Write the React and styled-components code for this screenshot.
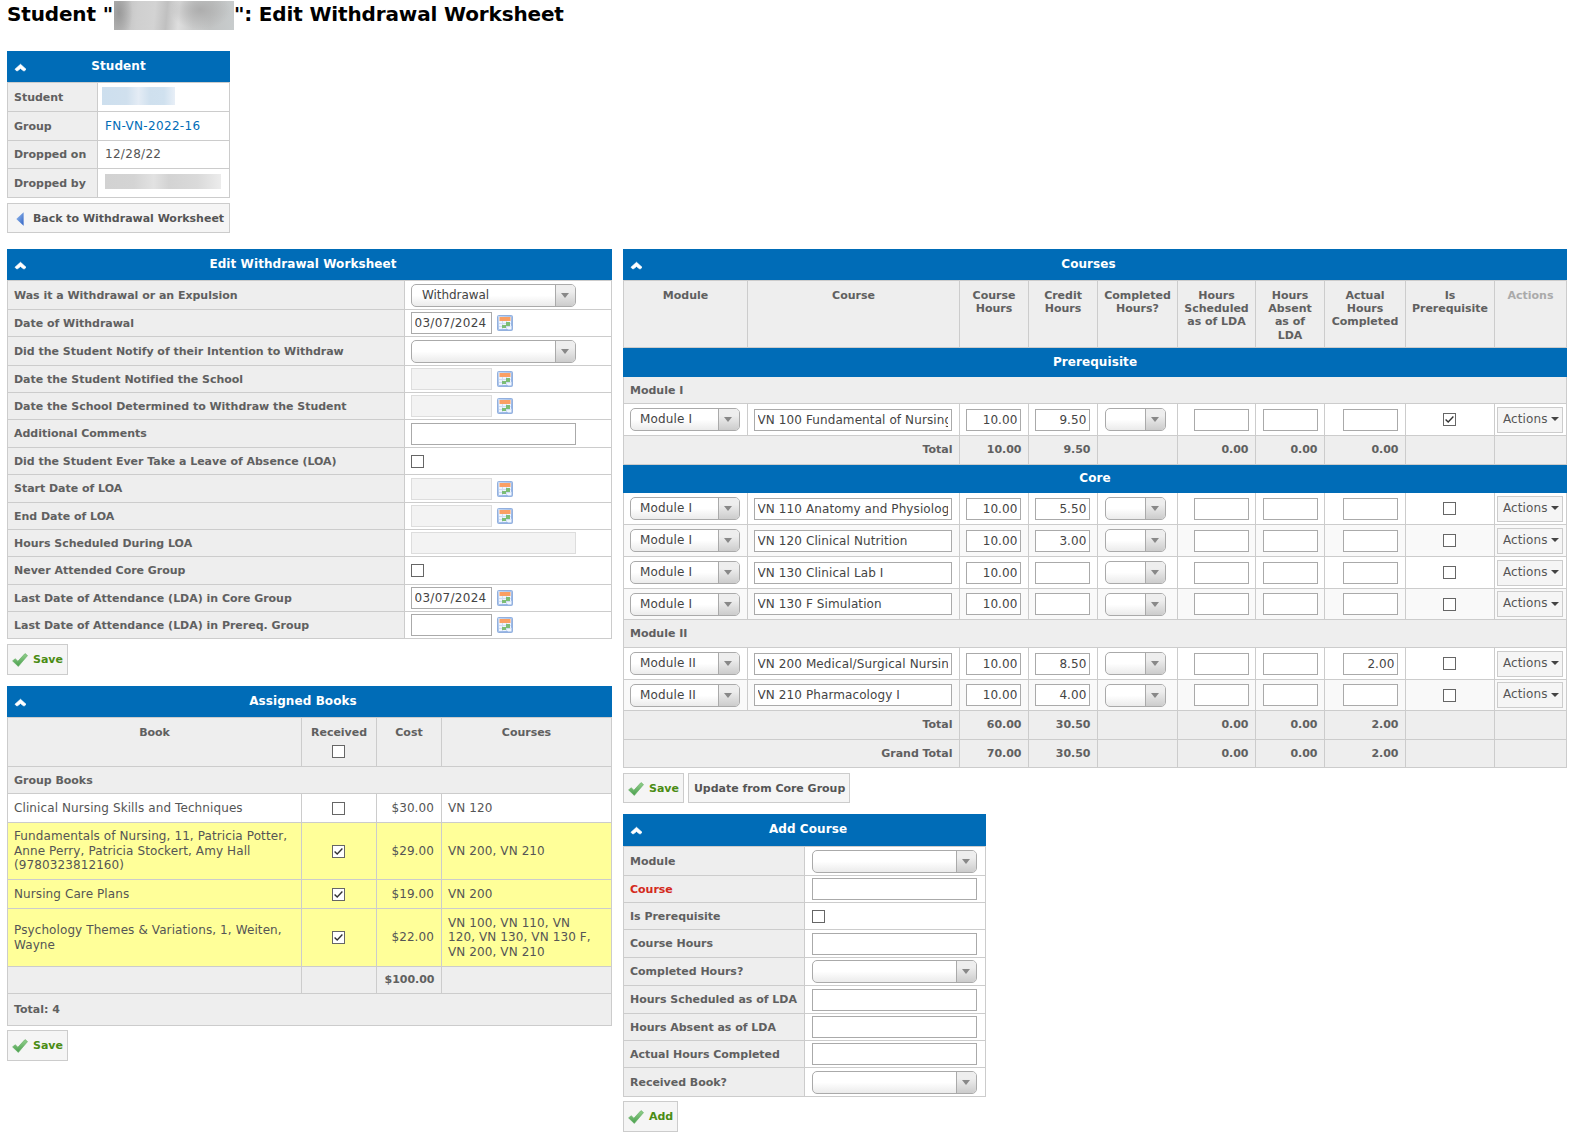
import React from 'react';
import styled, { createGlobalStyle, css } from 'styled-components';

const worksheetRows = [
  { label: 'Was it a Withdrawal or an Expulsion', type: 'select', value: 'Withdrawal', h: 29 },
  { label: 'Date of Withdrawal', type: 'date', value: '03/07/2024', h: 27 },
  { label: 'Did the Student Notify of their Intention to Withdraw', type: 'select', h: 29 },
  { label: 'Date the Student Notified the School', type: 'date', disabled: true, h: 27 },
  { label: 'Date the School Determined to Withdraw the Student', type: 'date', disabled: true, h: 27 },
  { label: 'Additional Comments', type: 'text', h: 28 },
  { label: 'Did the Student Ever Take a Leave of Absence (LOA)', type: 'check', h: 27 },
  { label: 'Start Date of LOA', type: 'date', disabled: true, h: 28 },
  { label: 'End Date of LOA', type: 'date', disabled: true, h: 27 },
  { label: 'Hours Scheduled During LOA', type: 'text', disabled: true, h: 27 },
  { label: 'Never Attended Core Group', type: 'check', h: 28 },
  { label: 'Last Date of Attendance (LDA) in Core Group', type: 'date', value: '03/07/2024', h: 27 },
  { label: 'Last Date of Attendance (LDA) in Prereq. Group', type: 'date', h: 27 },
];

const addCourseRows = [
  { label: 'Module', type: 'select', h: 29 },
  { label: 'Course', type: 'text', required: true, h: 27 },
  { label: 'Is Prerequisite', type: 'check', h: 27 },
  { label: 'Course Hours', type: 'text', h: 28 },
  { label: 'Completed Hours?', type: 'select', h: 28 },
  { label: 'Hours Scheduled as of LDA', type: 'text', h: 28 },
  { label: 'Hours Absent as of LDA', type: 'text', h: 27 },
  { label: 'Actual Hours Completed', type: 'text', h: 27 },
  { label: 'Received Book?', type: 'select', h: 29 },
];

const books = [
  { title: 'Clinical Nursing Skills and Techniques', cost: '$30.00', courses: 'VN 120', h: 29 },
  {
    title: 'Fundamentals of Nursing, 11, Patricia Potter, Anne Perry, Patricia Stockert, Amy Hall (9780323812160)',
    received: true,
    cost: '$29.00',
    courses: 'VN 200, VN 210',
    h: 57,
  },
  { title: 'Nursing Care Plans', received: true, cost: '$19.00', courses: 'VN 200', h: 29 },
  {
    title: 'Psychology Themes & Variations, 1, Weiten, Wayne',
    received: true,
    cost: '$22.00',
    courses: 'VN 100, VN 110, VN 120, VN 130, VN 130 F, VN 200, VN 210',
    h: 58,
  },
];

const courseHeads = [
  { text: 'Module' },
  { text: 'Course' },
  { text: 'Course Hours' },
  { text: 'Credit Hours' },
  { text: 'Completed Hours?' },
  { text: 'Hours Scheduled as of LDA' },
  { text: 'Hours Absent as of LDA', pad: 9 },
  { text: 'Actual Hours Completed' },
  { text: 'Is Prerequisite' },
  { text: 'Actions', faded: true },
];

const prerequisite = [
  { module: 'Module I', course: 'VN 100 Fundamental of Nursing', credit: '9.50', prereq: true, h: 32 },
];

const coreOne = [
  { module: 'Module I', course: 'VN 110 Anatomy and Physiology', credit: '5.50', h: 31, flush: true },
  { module: 'Module I', course: 'VN 120 Clinical Nutrition', credit: '3.00', h: 32, alt: true },
  { module: 'Module I', course: 'VN 130 Clinical Lab I', credit: '', h: 32 },
  { module: 'Module I', course: 'VN 130 F Simulation', credit: '', h: 31, alt: true },
];

const coreTwo = [
  { module: 'Module II', course: 'VN 200 Medical/Surgical Nursing', credit: '8.50', actual: '2.00', h: 32 },
  { module: 'Module II', course: 'VN 210 Pharmacology I', credit: '4.00', h: 31, alt: true },
];

const studentCols = '89px 132px';
const worksheetCols = '396px 207px';
const bookCols = '293px 75px 65px 170px';
const courseCols = '123px 212px 69px 69px 80px 78px 69px 81px 89px 72px';
const addCols = '180px 181px';

const CheckMark = () => (
  <svg width='16' height='14' viewBox='0 0 16 14'>
    <defs>
      <linearGradient id='tick' x1='0' y1='0' x2='0' y2='1'>
        <stop offset='0' stopColor='#93d08d' />
        <stop offset='1' stopColor='#4aa04e' />
      </linearGradient>
    </defs>
    <path
      d='M0.6 7.9 L3.2 5.8 L5.9 8.2 L13 0.6 L15.5 2.6 L6.3 13.4 Z'
      fill='url(#tick)'
      stroke='#69b067'
      strokeWidth='0.7'
      strokeLinejoin='round'
    />
  </svg>
);

const Calendar = () => (
  <svg width='16' height='16' viewBox='0 0 16 16'>
    <defs>
      <linearGradient id='cal' x1='0' y1='0' x2='1' y2='1'>
        <stop offset='0' stopColor='#c9dcf6' />
        <stop offset='1' stopColor='#86a9df' />
      </linearGradient>
    </defs>
    <rect x='0.5' y='0.5' width='15' height='15' rx='1' fill='url(#cal)' stroke='#93b0de' />
    <rect x='2' y='2' width='12' height='12' fill='#eef4fd' />
    <rect x='2.5' y='2' width='11' height='4' fill='#fa9f63' />
    <path d='M2 8.5h12M2 11.5h12M5.5 6v8M9.5 6v8' stroke='#cfdcf2' strokeWidth='1' />
    <rect x='9' y='7' width='4' height='4' fill='#7cbd76' />
    <rect x='5' y='10' width='4' height='3' fill='#7cbd76' />
    <path d='M14.5 10.5v4h-4z' fill='#f3f8ff' />
  </svg>
);

const BackArrow = () => (
  <svg width='8' height='14' viewBox='0 0 8 14'>
    <defs>
      <linearGradient id='back' x1='0' y1='0' x2='1' y2='1'>
        <stop offset='0' stopColor='#9cc0f0' />
        <stop offset='1' stopColor='#2f62c4' />
      </linearGradient>
    </defs>
    <path d='M7.6 0.3v13.4L0.3 7z' fill='url(#back)' />
  </svg>
);

const Tick = () => (
  <svg width='11' height='11' viewBox='0 0 11 11'>
    <path d='M1.6 5.4 L4.2 8 L9.4 2.6' fill='none' stroke='#333' strokeWidth='1.4' />
  </svg>
);

const PanelTitle = ({ children, h, shift }) => (
  <TitleBar $h={h} $shift={shift}>
    <Caret width='13' height='9' viewBox='0 0 13 9'>
      <path
        d='M6.5 1.3 L12 6.3 L10.6 7.7 H9.4 L6.5 5.4 L3.6 7.7 H2.4 L1 6.3 Z'
        fill='#fff'
        stroke='#fff'
        strokeWidth='0.8'
        strokeLinejoin='round'
      />
    </Caret>
    <span>{children}</span>
  </TitleBar>
);

const Checkbox = ({ checked }) => <Box role='checkbox'>{checked && <Tick />}</Box>;

const Select = ({ children, width = 165, arrow }) => (
  <SelectBox $width={width}>
    <SelectText $wide={width === 165}>{children}</SelectText>
    <SelectArrow $width={arrow}>
      <Triangle />
    </SelectArrow>
  </SelectBox>
);

const Field = ({ type, value, disabled }) => {
  if (type === 'select') return <Select>{value}</Select>;
  if (type === 'check') return <Checkbox />;
  if (type === 'date') {
    return (
      <>
        <DateInput $width={81} defaultValue={value} disabled={disabled} />
        <Calendar />
      </>
    );
  }
  return <Input $width={165} defaultValue={value} disabled={disabled} />;
};

const FormRows = ({ rows, cols, indent }) =>
  rows.map((row) => (
    <Row key={row.label} $cols={cols} $h={row.h}>
      <Label $required={row.required}>{row.label}</Label>
      <Cell $left={indent}>
        <Field {...row} />
      </Cell>
    </Row>
  ));

const CourseRows = ({ rows }) =>
  rows.map((row) => (
    <Row key={row.course} $cols={courseCols} $h={row.h} $alt={row.alt} $flush={row.flush}>
      <Cell>
        <Select width={110} arrow={21}>
          {row.module}
        </Select>
      </Cell>
      <Cell>
        <Input $width={198} defaultValue={row.course} />
      </Cell>
      <Cell $align='flex-end' $right={7}>
        <Input $width={55} $number defaultValue='10.00' />
      </Cell>
      <Cell $align='flex-end' $right={7}>
        <Input $width={55} $number defaultValue={row.credit} />
      </Cell>
      <Cell $left={7}>
        <Select width={61} />
      </Cell>
      <Cell $align='flex-end'>
        <Input $width={55} $number />
      </Cell>
      <Cell $align='flex-end'>
        <Input $width={55} $number />
      </Cell>
      <Cell $align='flex-end' $right={7}>
        <Input $width={55} $number defaultValue={row.actual} />
      </Cell>
      <Cell $align='center' $right={8}>
        <Checkbox checked={row.prereq} />
      </Cell>
      <Cell $left={2} $right={2}>
        <ActionsButton>
          Actions
          <Triangle $dark />
        </ActionsButton>
      </Cell>
    </Row>
  ));

const TotalRow = ({ label, values, h }) => (
  <Row $cols={courseCols} $h={h} $grey>
    <TotalCell $span={2}>{label}</TotalCell>
    {values.map((value, i) => (
      <TotalCell key={i}>{value}</TotalCell>
    ))}
  </Row>
);

const App = () => {
  return (
    <Page>
      <GlobalStyle />
      <Heading>
        <span>Student "</span>
        <HiddenName />
        <span>": Edit Withdrawal Worksheet</span>
      </Heading>

      <StudentPanel>
        <PanelTitle>Student</PanelTitle>
        <Row $cols={studentCols} $h={29}>
          <Label>Student</Label>
          <Cell $left={7}>
            <HiddenLink />
          </Cell>
        </Row>
        <Row $cols={studentCols} $h={29}>
          <Label>Group</Label>
          <Cell $left={7}>
            <GroupLink href='#'>FN-VN-2022-16</GroupLink>
          </Cell>
        </Row>
        <Row $cols={studentCols} $h={28}>
          <Label>Dropped on</Label>
          <Cell $left={7}>
            <Dropped>12/28/22</Dropped>
          </Cell>
        </Row>
        <Row $cols={studentCols} $h={29}>
          <Label>Dropped by</Label>
          <Cell $left={7}>
            <HiddenStaff />
          </Cell>
        </Row>
      </StudentPanel>
      <Buttons>
        <Button $back>
          <BackArrow />
          Back to Withdrawal Worksheet
        </Button>
      </Buttons>

      <Columns>
        <Left>
          <Panel>
            <PanelTitle shift={-13}>Edit Withdrawal Worksheet</PanelTitle>
            <FormRows rows={worksheetRows} cols={worksheetCols} />
          </Panel>
          <Buttons>
            <Button $green $h={31}>
              <CheckMark />
              Save
            </Button>
          </Buttons>

          <BooksPanel>
            <PanelTitle shift={-13}>Assigned Books</PanelTitle>
            <Row $cols={bookCols} $h={49} $grey>
              <Head>Book</Head>
              <Head>
                Received
                <Checkbox />
              </Head>
              <Head>Cost</Head>
              <Head>Courses</Head>
            </Row>
            <Row $cols='1fr' $h={27}>
              <Label>Group Books</Label>
            </Row>
            {books.map((book) => (
              <Row key={book.title} $cols={bookCols} $h={book.h} $marked={book.received}>
                <Cell>{book.title}</Cell>
                <Cell $align='center' $right={8}>
                  <Checkbox checked={book.received} />
                </Cell>
                <Cell $align='flex-end' $right={7}>
                  {book.cost}
                </Cell>
                <Cell $right={14}>{book.courses}</Cell>
              </Row>
            ))}
            <Row $cols={bookCols} $h={27} $grey>
              <TotalCell />
              <TotalCell />
              <TotalCell>$100.00</TotalCell>
              <TotalCell />
            </Row>
            <Row $cols='1fr' $h={32}>
              <Label>Total: 4</Label>
            </Row>
          </BooksPanel>
          <Buttons $near>
            <Button $green $h={31}>
              <CheckMark />
              Save
            </Button>
          </Buttons>
        </Left>

        <Right>
          <Panel>
            <PanelTitle shift={-13}>Courses</PanelTitle>
            <Row $cols={courseCols} $h={67} $grey>
              {courseHeads.map((head) => (
                <Head key={head.text} $pad={head.pad} $faded={head.faded}>
                  {head.text}
                </Head>
              ))}
            </Row>
            <Section $h={30}>Prerequisite</Section>
            <Row $cols='1fr' $h={26} $flush>
              <Label>Module I</Label>
            </Row>
            <CourseRows rows={prerequisite} />
            <TotalRow label='Total' h={29} values={['10.00', '9.50', '', '0.00', '0.00', '0.00', '', '']} />
            <Section $h={29}>Core</Section>
            <CourseRows rows={coreOne} />
            <Row $cols='1fr' $h={28}>
              <Label>Module II</Label>
            </Row>
            <CourseRows rows={coreTwo} />
            <TotalRow label='Total' h={29} values={['60.00', '30.50', '', '0.00', '0.00', '2.00', '', '']} />
            <TotalRow label='Grand Total' h={28} values={['70.00', '30.50', '', '0.00', '0.00', '2.00', '', '']} />
          </Panel>
          <Buttons>
            <Button $green>
              <CheckMark />
              Save
            </Button>
            <Button $plain>Update from Core Group</Button>
          </Buttons>

          <AddPanel>
            <PanelTitle h={32} shift={7}>
              Add Course
            </PanelTitle>
            <FormRows rows={addCourseRows} cols={addCols} indent={7} />
          </AddPanel>
          <Buttons $near>
            <Button $green $h={31}>
              <CheckMark />
              Add
            </Button>
          </Buttons>
        </Right>
      </Columns>
    </Page>
  );
};

const GlobalStyle = createGlobalStyle`
  * {
    box-sizing: border-box;
  }

  body {
    margin: 0;
    background: #fff;
    color: #555;
    font-family: Verdana, 'DejaVu Sans', sans-serif;
    font-size: 12px;
    line-height: 14.4px;
    letter-spacing: 0.1px;
  }

  svg {
    display: block;
    flex: none;
  }
`;

const Page = styled.div`
  width: 1583px;
  height: 1146px;
  padding: 0 7px;
  overflow: hidden;
`;

const Heading = styled.h1`
  display: flex;
  height: 30px;
  margin: 0 0 21px;
  color: #000;
  font-size: 20px;
  line-height: 28px;
  white-space: pre;
  letter-spacing: -0.15px;
`;

const HiddenName = styled.div`
  width: 120px;
  height: 29px;
  margin: 1px 0 0 1px;
  background: radial-gradient(ellipse 14px 30px at 4% 40%, #999 0%, rgba(153, 153, 153, 0) 100%),
    radial-gradient(ellipse 30px 20px at 72% 30%, #adadad 0%, rgba(173, 173, 173, 0) 100%),
    linear-gradient(95deg, #b8b8b8 0%, #cfcfcf 20%, #d3d3d3 34%, #c0c0c0 44%, #dedede 54%, #cbcccc 66%, #c2c4c4 80%, #c8cccd 100%);
`;

const HiddenLink = styled.div`
  width: 73px;
  height: 18px;
  margin: -2px 0 0 -3px;
  background: linear-gradient(90deg, #cddfee 0%, #d0e0ee 34%, #e4ecf5 50%, #cfe0ee 66%, #d0e1ef 85%, #e8eff7 100%);
`;

const HiddenStaff = styled.div`
  width: 116px;
  height: 15px;
  margin-top: -3px;
  background: linear-gradient(90deg, #d2d2d2 0%, #d4d4d4 25%, #e2e2e2 42%, #d3d3d3 55%, #dadada 80%, #ececec 100%);
`;

const Panel = styled.div`
  border-bottom: 1px solid #ccc;
`;

const StudentPanel = styled(Panel)`
  width: 223px;
`;

const BooksPanel = styled(Panel)`
  margin-top: 11px;
`;

const AddPanel = styled(Panel)`
  width: 363px;
  margin-top: 11px;
`;

const Columns = styled.div`
  display: flex;
  align-items: flex-start;
  gap: 11px;
  margin-top: 16px;
`;

const Left = styled.div`
  width: 605px;
`;

const Right = styled.div`
  width: 944px;
`;

const bar = css`
  display: flex;
  justify-content: center;
  align-items: center;
  background: #006cb7;
  color: #fff;
  font-weight: bold;
  letter-spacing: 0.08px;
`;

const TitleBar = styled.div`
  ${bar}
  position: relative;
  height: ${(props) => props.$h || 31}px;
  padding: 0 ${(props) => Math.max(0, -props.$shift || 0)}px 1px ${(props) => Math.max(0, props.$shift || 0)}px;
`;

const Caret = styled.svg`
  position: absolute;
  left: 7px;
  top: 11.5px;
`;

const Section = styled.div`
  ${bar}
  height: ${(props) => props.$h}px;
  padding-bottom: 1px;
  border-top: 1px solid #ccc;
`;

const rowBackground = (props) => {
  if (props.$grey) return '#eee';
  if (props.$marked) return '#ff9';
  return props.$alt ? '#f9f9f9' : '#fff';
};

const Row = styled.div`
  display: grid;
  grid-template-columns: ${(props) => props.$cols};
  height: ${(props) => props.$h}px;
  border: solid #ccc;
  border-width: ${(props) => (props.$flush ? 0 : 1)}px 1px 0;
  background: ${rowBackground};
`;

const divided = css`
  & + & {
    border-left: 1px solid #ccc;
  }
`;

const Cell = styled.div`
  display: flex;
  align-items: center;
  justify-content: ${(props) => props.$align || 'flex-start'};
  gap: 5px;
  min-width: 0;
  padding: 0 ${(props) => props.$right || 6}px 0 ${(props) => props.$left || 6}px;
  ${divided}
`;

const smallBold = css`
  font-size: 11px;
  font-weight: bold;
  line-height: 13.2px;
  letter-spacing: -0.02px;
`;

const Label = styled.div`
  display: flex;
  align-items: center;
  padding: 1px 6px 0;
  background: #eee;
  color: ${(props) => (props.$required ? '#d42a1c' : '#606060')};
  white-space: nowrap;
  ${smallBold}

  & + ${Cell} {
    border-left: 1px solid #ccc;
  }
`;

const Head = styled.div`
  display: flex;
  flex-direction: column;
  align-items: center;
  gap: 6px;
  padding: 8px ${(props) => props.$pad || 5}px 0;
  color: ${(props) => (props.$faded ? '#aaa' : '#606060')};
  text-align: center;
  ${smallBold}
  ${divided}

  > span {
    margin-right: 2px;
  }
`;

const TotalCell = styled.div`
  grid-column: span ${(props) => props.$span || 1};
  display: flex;
  align-items: center;
  justify-content: flex-end;
  padding: 0 6.5px 0 0;
  color: #606060;
  ${smallBold}
  ${divided}
`;

const GroupLink = styled.a`
  color: #006cb7;
  letter-spacing: 0.33px;
  text-decoration: none;
`;

const Dropped = styled.span`
  letter-spacing: 0.3px;
`;

const Input = styled.input`
  width: ${(props) => props.$width}px;
  height: 22px;
  padding: 0 ${(props) => (props.$number ? 2.5 : 3)}px 0 2.5px;
  border: 1px solid #aaa;
  border-radius: 0;
  background: #fff;
  color: #444;
  font: inherit;
  letter-spacing: inherit;
  text-align: ${(props) => (props.$number ? 'right' : 'left')};

  &:disabled {
    border-color: #ddd;
    background: #f3f3f3;
  }
`;

const DateInput = styled(Input)`
  letter-spacing: 0.28px;
`;

const Box = styled.span`
  display: block;
  flex: none;
  width: 13px;
  height: 13px;
  border: 1px solid #666;
  background: #fff;
`;

const SelectBox = styled.div`
  display: flex;
  width: ${(props) => props.$width}px;
  height: 23px;
  border: 1px solid #aaa;
  border-radius: 5px;
  background: linear-gradient(#fff 20%, #fff 50%, #ebebeb 100%);
  overflow: hidden;
`;

const SelectText = styled.div`
  flex: 1;
  padding: 3px 0 0 ${(props) => (props.$wide ? 10 : 9)}px;
  color: #444;
  letter-spacing: ${(props) => (props.$wide ? -0.05 : 0.15)}px;
  white-space: nowrap;
`;

const SelectArrow = styled.div`
  display: flex;
  align-items: center;
  justify-content: center;
  width: ${(props) => props.$width || 20}px;
  padding-right: 2px;
  border-left: 1px solid #aaa;
  background: linear-gradient(#eee 30%, #ccc 100%);
`;

const Triangle = styled.i`
  border: solid transparent;
  border-width: ${(props) => (props.$dark ? '4px 4px 0' : '5px 4px 0')};
  border-top-color: ${(props) => (props.$dark ? '#444' : '#888')};
`;

const ActionsButton = styled.button`
  display: flex;
  align-items: center;
  gap: 3px;
  width: 66px;
  height: 26px;
  padding: 0 0 1px 5px;
  border: 1px solid #ccc;
  background: #f5f5f5;
  color: #555;
  font: inherit;
  letter-spacing: inherit;
`;

const Buttons = styled.div`
  display: flex;
  gap: 4px;
  margin-top: ${(props) => (props.$near ? 4 : 5)}px;
`;

const Button = styled.button`
  display: flex;
  align-items: center;
  gap: ${(props) => (props.$back ? 9 : 5)}px;
  height: ${(props) => props.$h || 30}px;
  padding: 1px ${(props) => (props.$back ? 5 : 4)}px 0 ${(props) => (props.$back ? 8 : props.$plain ? 5 : 4)}px;
  border: 1px solid #ccc;
  background: #f5f5f5;
  color: ${(props) => (props.$green ? '#4a8c14' : '#555')};
  font-family: inherit;
  white-space: nowrap;
  ${smallBold}
`;

export default App;
